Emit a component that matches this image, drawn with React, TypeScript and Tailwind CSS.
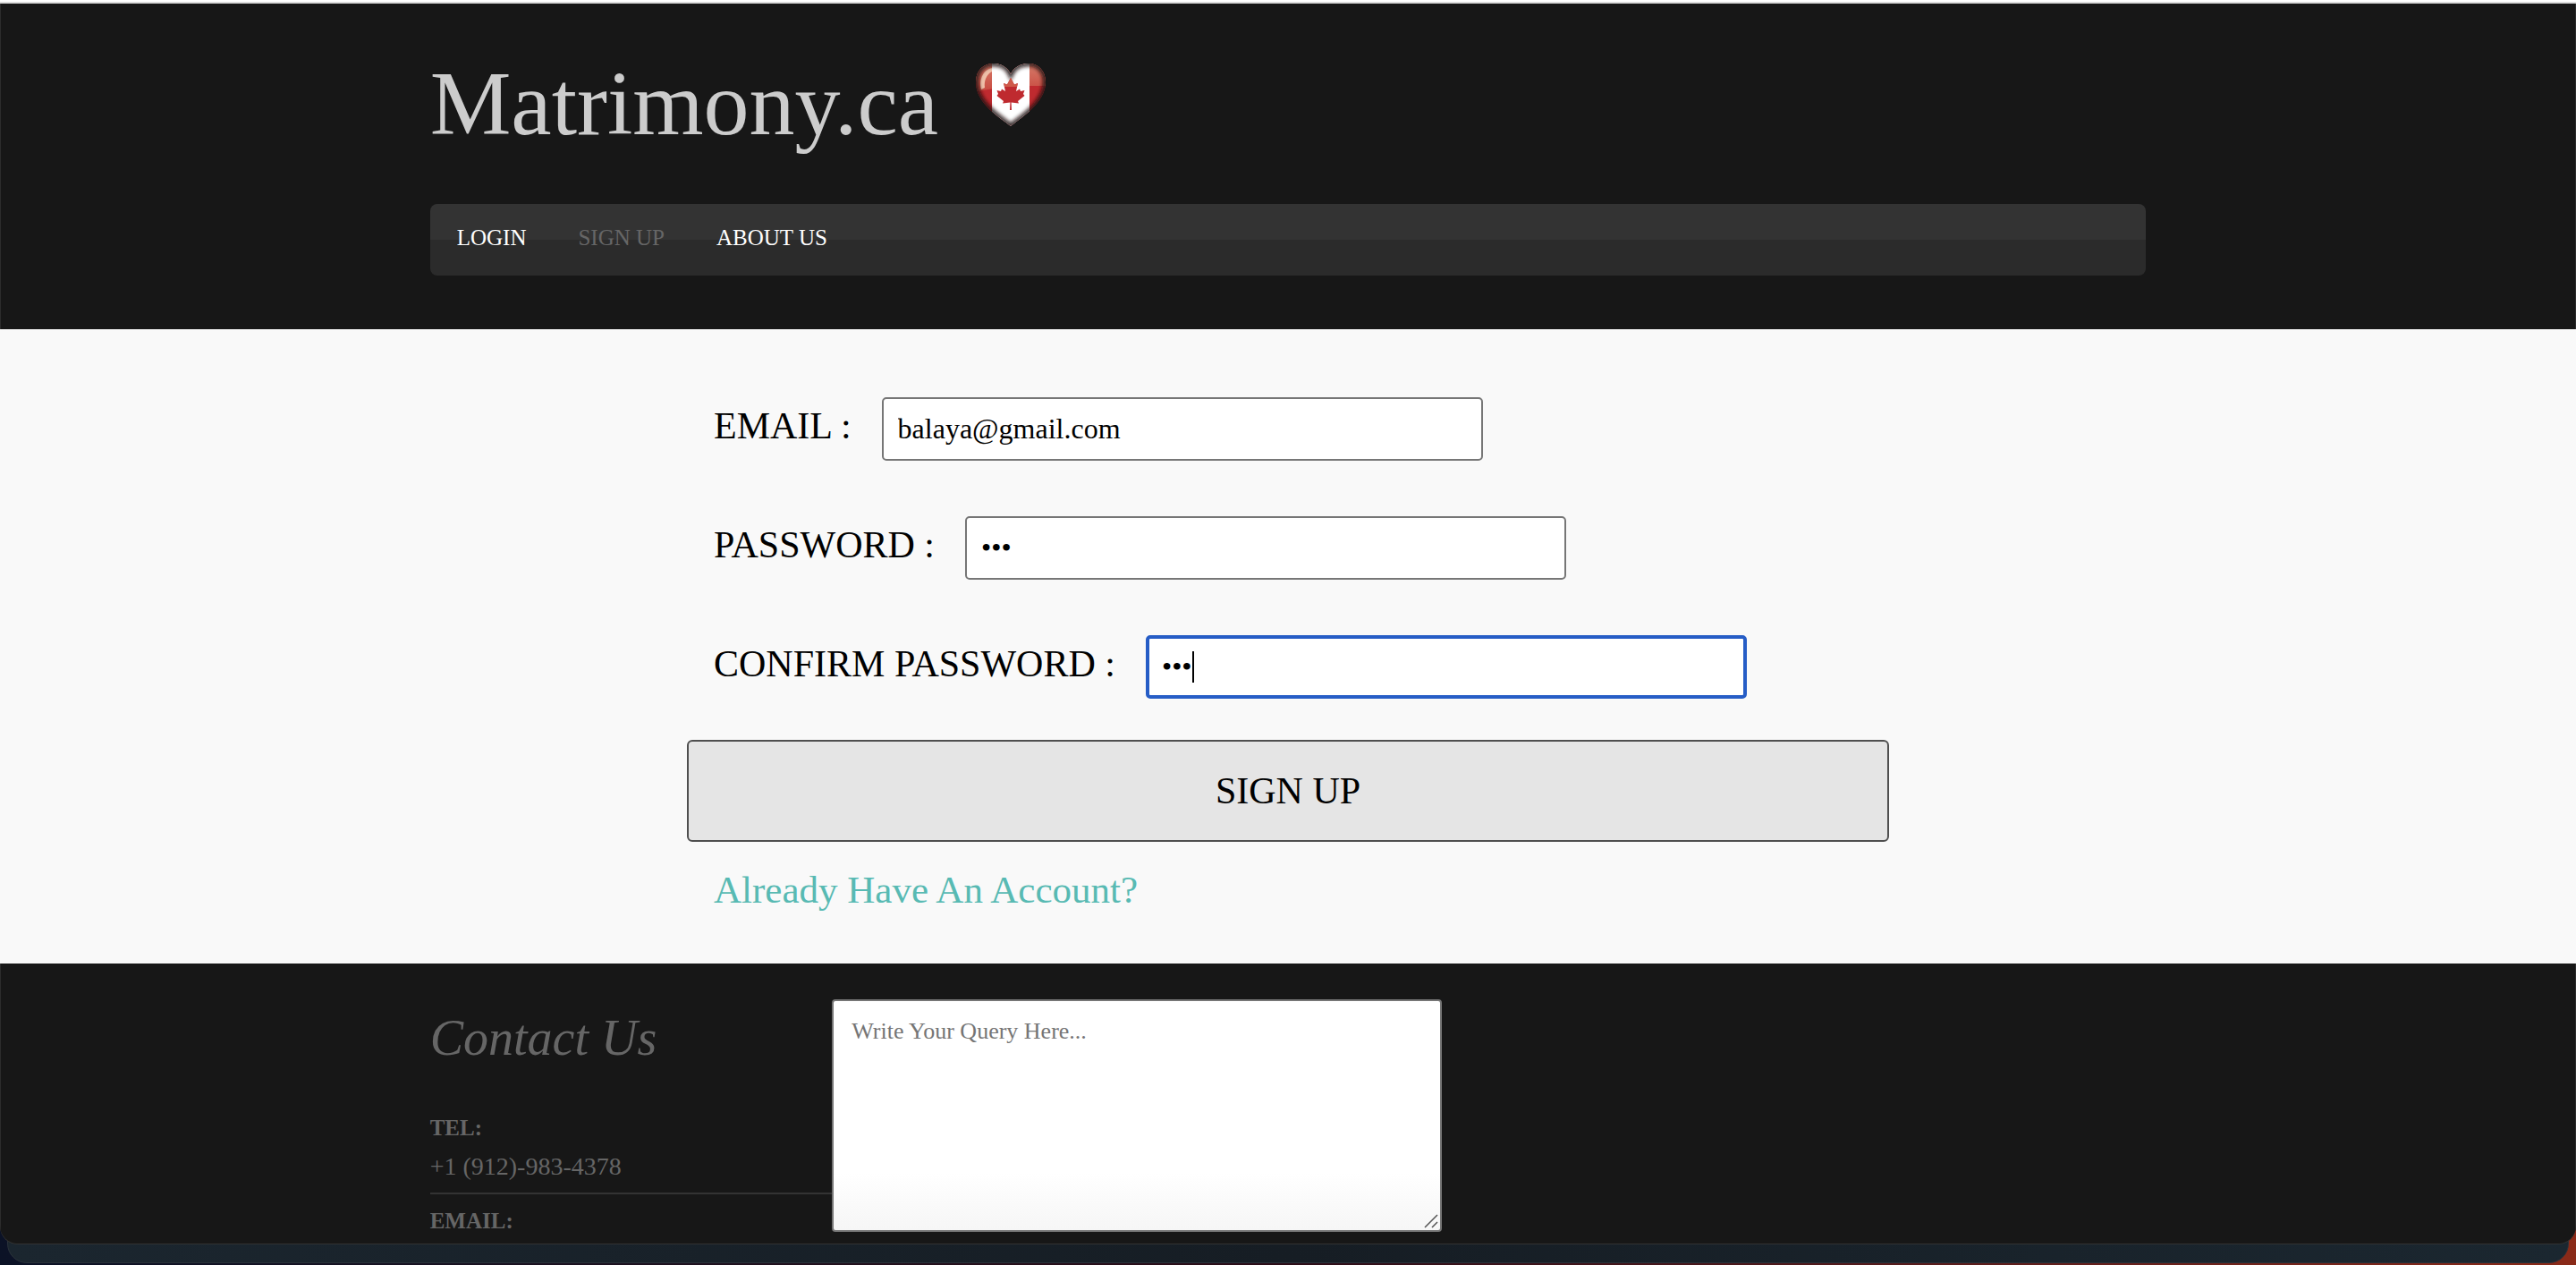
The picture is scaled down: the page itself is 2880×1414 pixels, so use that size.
import { useEffect, useRef } from "react";

const NAV_LINKS = [
  { label: "LOGIN", active: false },
  { label: "SIGN UP", active: true },
  { label: "ABOUT US", active: false },
];

const HEART =
  "M61 91 C50 82 22 66 22 42 C22 28 31 21 42 21 C51 21 58 26 61 33 C64 26 71 21 81 21 C92 21 100 29 100 42 C100 65 72 82 61 91Z";

function HeartFlag() {
  return (
    <svg viewBox="0 0 120 110" className="h-[110px] w-[120px] shrink-0" aria-hidden="true">
      <defs>
        <clipPath id="heart">
          <path d={HEART} />
        </clipPath>
        <linearGradient id="gloss" x1="0" y1="0" x2="0" y2="1">
          <stop offset="0" stopColor="#d98672" />
          <stop offset="1" stopColor="#c84a40" />
        </linearGradient>
        <filter id="soft" x="-20%" y="-20%" width="140%" height="140%">
          <feGaussianBlur stdDeviation="2" />
        </filter>
      </defs>
      <g clipPath="url(#heart)">
        <rect x="18" y="15" width="86" height="80" fill="#bf2a2f" />
        <path d="M18 15H104V46H60L24 52Z" fill="url(#gloss)" />
        <path d="M28 50 C25 38 31 27 41 26 L40 30 C34 33 31 40 32 48Z" fill="#efbfa8" />
        <rect x="40" y="15" width="42" height="80" fill="#fff" />
        <path
          d={HEART}
          fill="none"
          stroke="#1c0c0c"
          strokeOpacity="0.9"
          strokeWidth="6"
          filter="url(#soft)"
        />
      </g>
      <path
        d="M61 37 L57 44.500 L53 43 L55 52 L51 49.500 L50 52 L45.500 51 L47 55 L45.500 57 L53 63 L52 65.500 L60.400 64.500 L60 73 H62 L61.600 64.500 L70 65.500 L69 63 L76.500 57 L75 55 L76.500 51 L72 52 L71 49.500 L67 52 L69 43 L65 44.500Z"
        fill="#bf2a2f"
      />
      <path d="M61 37 L57 44.500 L53.500 43.300 L54 47 H68 L68.500 43.300 L65 44.500Z" fill="#cf5a4a" />
    </svg>
  );
}

function Field({
  id,
  label,
  type,
  value,
  focused = false,
}: {
  id: string;
  label: string;
  type: string;
  value: string;
  focused?: boolean;
}) {
  const ref = useRef<HTMLInputElement>(null);
  useEffect(() => {
    if (focused) ref.current?.focus();
  }, [focused]);
  return (
    <div className="flex items-center gap-[34px]">
      <label htmlFor={id} className="ml-[30px] whitespace-nowrap pb-2 text-[42px] leading-[60px]">
        {label}
      </label>
      <div className="relative w-1/2">
        <input
          ref={ref}
          id={id}
          type={type}
          defaultValue={value}
          className="block h-[71px] w-full rounded-[5px] border-2 border-[#767676] bg-white px-4 text-[32px] caret-transparent outline-none focus:border-4 focus:border-[#265dc6] focus:px-[14px]"
        />
        {focused && (
          <span className="pointer-events-none absolute left-[52px] top-[18px] h-[35px] w-0.5 bg-black" />
        )}
      </div>
    </div>
  );
}

export default function App() {
  return (
    <div className="flex min-h-screen flex-col bg-linear-to-r from-[#0b1226] via-[#2c0d18] to-[#8a2a18] font-['Liberation_Serif',serif] text-black">
      <div className="relative z-10 overflow-hidden rounded-b-[20px] bg-[#171717] shadow-[0_1px_0_#333]">
        <div className="h-1 border-b-2 border-[#dcdcdc] bg-white" />
        <header className="border-x border-[#2c2c2c] pb-[60px] pt-[46px]">
          <div className="mx-auto w-2/3">
            <div className="flex h-[178px] items-start">
              <h1 className="text-[102px] leading-[132px] text-[#cccccc]">Matrimony.ca</h1>
              <div className="ml-[20px]">
                <HeartFlag />
              </div>
            </div>
            <nav className="flex h-20 gap-[58px] rounded-lg bg-linear-to-b from-[#333333] from-50% to-[#2b2b2b] to-50% px-[30px] pt-[22px] text-[25px] leading-8">
              {NAV_LINKS.map((link) => (
                <a key={link.label} href="#" className={link.active ? "text-[#666666]" : "text-white"}>
                  {link.label}
                </a>
              ))}
            </nav>
          </div>
        </header>

        <main className="bg-[#f9f9f9] pb-[52px] pt-[76px]">
          <form className="mx-auto w-[calc(100%*7/15)]">
            <div className="flex flex-col gap-[62px]">
              <Field id="email" label="EMAIL :" type="email" value="balaya@gmail.com" />
              <Field id="password" label="PASSWORD :" type="password" value="abc" />
              <Field id="confirm" label="CONFIRM PASSWORD :" type="password" value="abc" focused />
            </div>
            <button
              type="button"
              className="mt-[46px] block h-[114px] w-full rounded-md border-2 border-[#4f4f4f] bg-[#e5e5e5] text-[42px]"
            >
              SIGN UP
            </button>
            <a href="#" className="ml-[30px] mt-6 inline-block text-[43px] leading-[60px] text-[#58bab3]">
              Already Have An Account?
            </a>
          </form>
        </main>

        <footer className="border-x border-[#2c2c2c] pb-[9px] pt-10 text-[#666666]">
          <div className="mx-auto flex w-2/3">
            <div className="flex-[450] pt-2">
              <h2 className="text-[56px] italic leading-[70px]">Contact Us</h2>
              <dl className="mt-[50px] text-[25px]">
                <dt className="font-bold leading-8">TEL:</dt>
                <dd className="mt-1 border-b-2 border-[#333333] pb-1.5 text-[28px] leading-[46px]">
                  +1 (912)-983-4378
                </dd>
                <dt className="mt-3.5 font-bold leading-8">EMAIL:</dt>
              </dl>
            </div>
            <div className="h-[260px] flex-[1470]">
              <div className="relative w-[682px]">
                <textarea
                  aria-label="Write your query"
                  placeholder="Write Your Query Here..."
                  className="block h-[260px] w-full resize-none rounded-[4px] border-2 border-[#767676] bg-linear-to-b from-white from-75% to-[#f6f6f6] px-5 py-[18px] text-[26px] leading-8 outline-none placeholder:text-[#757575]"
                />
                <svg
                  viewBox="0 0 16 16"
                  className="pointer-events-none absolute bottom-1 right-1 size-4"
                  fill="none"
                  stroke="#555"
                  strokeWidth="1.5"
                  aria-hidden="true"
                >
                  <path d="M1 15 L15 1 M9 15 L15 9" />
                </svg>
              </div>
            </div>
          </div>
        </footer>
      </div>
      <div className="mx-2 -mt-6 h-[46px] rounded-b-[22px] border border-[#2a323a] bg-linear-to-r from-[#1b262f] via-[#161d24] to-[#1b2730]" />
    </div>
  );
}
